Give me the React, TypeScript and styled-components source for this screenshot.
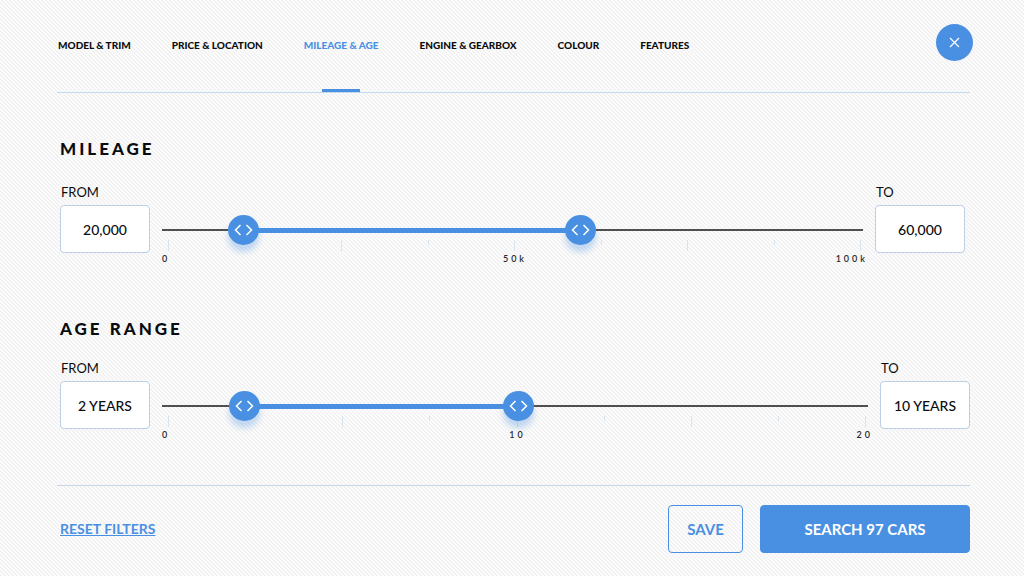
import React, { useState } from "react";
import styled, { createGlobalStyle } from "styled-components";

const blue = "#4a90e2";
const line = "#c3d9ee";

const GlobalStyle = createGlobalStyle`
  *, *::before, *::after { box-sizing: border-box; }
  body {
    margin: 0;
    color: #0b0c0f;
    font-family: Lato, "Liberation Sans", sans-serif;
    background-color: #fcfcfc;
    background-image: linear-gradient(45deg, #f2f2f2 25%, transparent 25%, transparent 50%, #f2f2f2 50%, #f2f2f2 75%, transparent 75%);
    background-size: 4px 4px;
  }
  button, input { font-family: inherit; color: inherit; }
`;

const Page = styled.div`
  padding: 24px 54px 23px 57px;
`;

const Header = styled.header`
  display: flex;
  justify-content: space-between;
  align-items: flex-start;
  border-bottom: 1px solid ${line};
`;

const Nav = styled.nav`
  display: flex;
  gap: 41px;
  padding-left: 1px;
`;

const NavLink = styled.a<{ $active?: boolean }>`
  display: flex;
  flex-direction: column;
  align-items: center;
  justify-content: space-between;
  height: 68px;
  padding-top: 14px;
  font-size: 10px;
  line-height: 14px;
  font-weight: 900;
  white-space: nowrap;
  text-decoration: none;
  color: ${(p) => (p.$active ? blue : "inherit")};

  &::after {
    content: "";
    width: 38px;
    height: 3px;
    background: ${(p) => (p.$active ? blue : "transparent")};
  }
`;

const CloseButton = styled.button`
  display: grid;
  place-items: center;
  width: 37px;
  height: 37px;
  margin-right: -3px;
  padding: 0;
  border: 0;
  border-radius: 50%;
  background: ${blue};
  color: #fff;
  cursor: pointer;
`;

const Section = styled.section<{ $inset?: boolean }>`
  padding: 46px ${(p) => (p.$inset ? 5 : 0)}px 0 3px;

  & + & { padding-top: 54px; }
`;

const Heading = styled.h2`
  margin: 0;
  font-size: 17px;
  line-height: 20px;
  font-weight: 900;
  letter-spacing: 3px;
`;

const FilterRow = styled.div<{ $gap: number }>`
  display: grid;
  grid-template-columns: 90px 1fr 90px;
  column-gap: 12px;
  margin-top: ${(p) => p.$gap}px;
`;

const Field = styled.div`
  display: flex;
  flex-direction: column;
`;

const FieldLabel = styled.label`
  padding: 0 0 4px 1px;
  font-size: 13px;
  line-height: 18px;
`;

const ValueInput = styled.input`
  width: 100%;
  height: 48px;
  padding: 0;
  border: 1px solid #bccfe6;
  border-radius: 4px;
  background: #fff;
  font-size: 14px;
  font-weight: 500;
  text-align: center;
`;

const SliderColumn = styled.div`
  padding-top: 32px;
`;

const Track = styled.div`
  position: relative;
  display: flex;
  align-items: center;
  height: 30px;

  &::before {
    content: "";
    width: 100%;
    height: 2px;
    background: #505050;
  }
`;

const Fill = styled.div`
  position: absolute;
  height: 5px;
  background: ${blue};
`;

const Thumb = styled.div`
  position: absolute;
  display: grid;
  place-items: center;
  width: 31px;
  height: 30px;
  margin-left: -15px;
  border-radius: 50%;
  background: ${blue};
  box-shadow: 0 7px 6px rgba(74, 144, 226, 0.32);
`;

const Range = styled.input`
  position: absolute;
  inset: 0;
  width: 100%;
  margin: 0;
  opacity: 0;
  pointer-events: none;

  &::-webkit-slider-thumb {
    width: 30px;
    height: 30px;
    pointer-events: auto;
    cursor: ew-resize;
  }
`;

const Ticks = styled.div`
  display: flex;
  justify-content: space-between;
  height: 11px;
  margin: -5px 2px 0 6px;
`;

const Tick = styled.span<{ $size: "long" | "short" | "none" }>`
  width: 1px;
  height: ${(p) => ({ long: 11, short: 5, none: 0 })[p.$size]}px;
  background: #d8e3f0;
`;

const Scale = styled.div`
  display: grid;
  grid-template-columns: repeat(3, 1fr);
  margin: 2px -5px 0 0;
  color: #26282c;
  font-size: 9px;
  line-height: 12px;
  font-weight: 600;
  letter-spacing: 3px;

  & > :nth-child(2) { text-align: center; }
  & > :nth-child(3) { text-align: right; }
`;

const Footer = styled.footer`
  display: flex;
  align-items: center;
  gap: 17px;
  margin-top: 44px;
  padding: 19px 0 0 3px;
  border-top: 1px solid #c8d7e7;
`;

const ResetLink = styled.a`
  margin-right: auto;
  font-size: 14px;
  line-height: 18px;
  font-weight: 700;
  color: ${blue};
  text-decoration: underline;
  text-underline-offset: 1px;
`;

const Button = styled.button<{ $primary?: boolean }>`
  height: 48px;
  width: ${(p) => (p.$primary ? 210 : 75)}px;
  padding: 0;
  border: 1px solid ${blue};
  border-radius: 4px;
  background: ${(p) => (p.$primary ? blue : "transparent")};
  color: ${(p) => (p.$primary ? "#fff" : blue)};
  font-size: 15px;
  font-weight: 700;
  cursor: pointer;
`;

const Arrows = () => (
  <svg width="19" height="12" viewBox="0 0 19 12" fill="none" stroke="#fff" strokeWidth="1.5" aria-hidden="true">
    <path d="M6.5 1 1.5 6l5 5M12.5 1l5 5-5 5" />
  </svg>
);

type FilterProps = {
  id: string;
  title: string;
  from: string;
  to: string;
  start: number;
  end: number;
  scale: string[];
  gap: number;
  inset?: boolean;
};

function RangeFilter({ id, title, from, to, start, end, scale, gap, inset }: FilterProps) {
  const [low, setLow] = useState(start);
  const [high, setHigh] = useState(end);

  return (
    <Section $inset={inset} aria-labelledby={`${id}-title`}>
      <Heading id={`${id}-title`}>{title}</Heading>
      <FilterRow $gap={gap}>
        <Field>
          <FieldLabel htmlFor={`${id}-from`}>FROM</FieldLabel>
          <ValueInput id={`${id}-from`} defaultValue={from} />
        </Field>
        <SliderColumn>
          <Track>
            <Fill style={{ left: `${low / 10}%`, right: `${100 - high / 10}%` }} />
            <Thumb style={{ left: `${low / 10}%` }}><Arrows /></Thumb>
            <Thumb style={{ left: `${high / 10}%` }}><Arrows /></Thumb>
            <Range type="range" aria-label={`${title} minimum`} max={1000} value={low}
              onChange={(e) => setLow(Math.min(+e.target.value, high))} />
            <Range type="range" aria-label={`${title} maximum`} max={1000} value={high}
              onChange={(e) => setHigh(Math.max(+e.target.value, low))} />
          </Track>
          <Ticks>
            {Array.from({ length: 9 }, (_, i) => (
              <Tick key={i} $size={i === 1 ? "none" : i % 2 ? "short" : "long"} />
            ))}
          </Ticks>
          <Scale>{scale.map((s) => <span key={s}>{s}</span>)}</Scale>
        </SliderColumn>
        <Field>
          <FieldLabel htmlFor={`${id}-to`}>TO</FieldLabel>
          <ValueInput id={`${id}-to`} defaultValue={to} />
        </Field>
      </FilterRow>
    </Section>
  );
}

const tabs = ["MODEL & TRIM", "PRICE & LOCATION", "MILEAGE & AGE", "ENGINE & GEARBOX", "COLOUR", "FEATURES"];

export default function App() {
  return (
    <>
      <GlobalStyle />
      <Page>
        <Header>
          <Nav>
            {tabs.map((tab, i) => (
              <NavLink key={tab} href="#" $active={i === 2}>{tab}</NavLink>
            ))}
          </Nav>
          <CloseButton aria-label="Close">
            <svg width="11" height="11" viewBox="0 0 11 11" stroke="currentColor" strokeWidth="1.2" aria-hidden="true">
              <path d="M1 1l9 9M10 1l-9 9" />
            </svg>
          </CloseButton>
        </Header>
        <main>
          <RangeFilter id="mileage" title="MILEAGE" from="20,000" to="60,000" start={115} end={597}
            scale={["0", "50k", "100k"]} gap={24} inset />
          <RangeFilter id="age" title="AGE RANGE" from="2 YEARS" to="10 YEARS" start={116} end={504}
            scale={["0", "10", "20"]} gap={20} />
        </main>
        <Footer>
          <ResetLink href="#">RESET FILTERS</ResetLink>
          <Button type="button">SAVE</Button>
          <Button type="button" $primary>SEARCH 97 CARS</Button>
        </Footer>
      </Page>
    </>
  );
}
